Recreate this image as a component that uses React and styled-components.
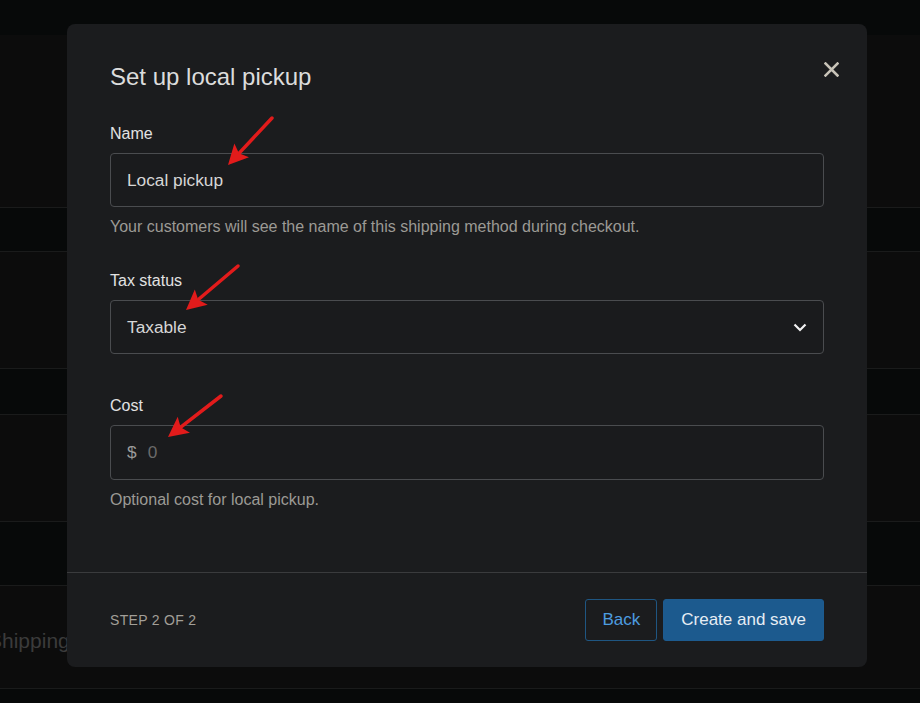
import React from 'react';
import styled, { createGlobalStyle } from 'styled-components';

const GlobalStyle = createGlobalStyle`
    html, body {
        margin: 0;
        padding: 0;
        background: #0b0b0b;
        font-family: "Liberation Sans", Arial, sans-serif;
        overflow: hidden;
    }
`;

const Page = styled.div`
    position: relative;
    width: 920px;
    height: 703px;
    overflow: hidden;
`;

const Band = styled.div`
    height: ${ p => p.h }px;
    background: ${ p => p.dark ? '#070909' : '#0c0c0c' };
    border-bottom: ${ p => p.line ? '1px solid #1a1b1b' : 'none' };
    display: flex;
    align-items: center;
`;

const BandText = styled.span`
    margin-left: -12px;
    margin-top: 8px;
    font-size: 21px;
    color: #3b3b3b;
`;

const Modal = styled.div`
    position: absolute;
    left: 67px;
    top: 24px;
    width: 800px;
    height: 643px;
    background: #1b1c1e;
    border-radius: 8px;
    display: flex;
    flex-direction: column;
`;

const Body = styled.div`
    position: relative;
    flex: 1;
    padding: 38px 43px 0;
    border-bottom: 1px solid #3a3b3d;
`;

const Title = styled.h2`
    margin: 0;
    font-size: 24px;
    line-height: 30px;
    font-weight: 400;
    color: #dcdcdc;
`;

const Close = styled.button`
    position: absolute;
    right: 27px;
    top: 36px;
    width: 18px;
    height: 18px;
    padding: 0;
    border: none;
    background: none;
    display: flex;
    align-items: center;
    justify-content: center;
`;

const Field = styled.div`
    position: relative;
    margin-top: ${ p => p.top }px;
`;

const Label = styled.div`
    font-size: 16px;
    line-height: 20px;
    color: #e2e2e2;
`;

const Box = styled.div`
    margin-top: 9px;
    height: ${ p => p.h || 54 }px;
    box-sizing: border-box;
    border: 1px solid #4a4c4f;
    border-radius: 4px;
    background: #1a1b1d;
    display: flex;
    align-items: center;
    padding: 0 16px;
    font-size: 17.3px;
    color: #d6d6d6;
`;

const Grow = styled.span`
    flex: 1;
`;

const Prefix = styled.span`
    color: #9b9b9b;
    margin-right: 11px;
`;

const Placeholder = styled.span`
    color: #6a6a6a;
`;

const Help = styled.div`
    margin-top: 10px;
    font-size: 16px;
    line-height: 20px;
    color: #9c9a95;
`;

const Arrow = styled.svg`
    position: absolute;
    left: ${ p => p.x }px;
    top: ${ p => p.y }px;
    overflow: visible;
`;

const Footer = styled.div`
    height: 94px;
    padding: 0 43px;
    display: flex;
    align-items: center;
    justify-content: space-between;
`;

const Step = styled.span`
    font-size: 14px;
    color: #a29f98;
    letter-spacing: 0.3px;
`;

const Buttons = styled.div`
    display: flex;
    gap: 6px;
`;

const Button = styled.button`
    height: 42px;
    padding: 0 ${ p => p.primary ? 17 : 16 }px;
    border-radius: 3px;
    font-family: inherit;
    font-size: 17px;
    border: 1px solid ${ p => p.primary ? '#1d5b8f' : '#1f5682' };
    background: ${ p => p.primary ? '#1c5a8e' : 'transparent' };
    color: ${ p => p.primary ? '#e6edf4' : '#4d9de0' };
`;

const RedArrow = ({ x, y, dx, dy }) => {
    const len = Math.hypot(dx, dy);
    const ux = dx / len;
    const uy = dy / len;
    const head = 20;
    const bx = dx - ux * head;
    const by = dy - uy * head;
    const px = -uy * 10;
    const py = ux * 10;
    return (
        <Arrow x={ x } y={ y } width="1" height="1">
            <line x1="0" y1="0" x2={ bx + ux * 3 } y2={ by + uy * 3 } stroke="#e21b1b" strokeWidth="3.5" strokeLinecap="round" />
            <polygon points={ `${ dx },${ dy } ${ bx + px },${ by + py } ${ bx + ux * 4 },${ by + uy * 4 } ${ bx - px },${ by - py }` } fill="#e21b1b" />
        </Arrow>
    );
};

const App = () => (
    <Page>
        <GlobalStyle />
        <Band h={ 35 } dark />
        <Band h={ 172 } line />
        <Band h={ 43 } dark line />
        <Band h={ 116 } line />
        <Band h={ 45 } dark line />
        <Band h={ 106 } line />
        <Band h={ 63 } dark line />
        <Band h={ 102 } line>
            <BandText>Shipping</BandText>
        </Band>
        <Band h={ 14 } dark />

        <Modal>
            <Body>
                <Title>Set up local pickup</Title>
                <Close aria-label="Close">
                    <svg width="15" height="15" viewBox="0 0 15 15">
                        <path d="M1.5 1.5 L13.5 13.5 M13.5 1.5 L1.5 13.5" stroke="#c8c3b8" strokeWidth="2.5" strokeLinecap="square" />
                    </svg>
                </Close>

                <Field top={ 32 }>
                    <Label>Name</Label>
                    <Box>Local pickup</Box>
                    <Help>Your customers will see the name of this shipping method during checkout.</Help>
                    <RedArrow x={ 162 } y={ -6 } dx={ -44 } dy={ 47 } />
                </Field>

                <Field top={ 34 }>
                    <Label>Tax status</Label>
                    <Box>
                        <Grow>Taxable</Grow>
                        <svg width="14" height="9" viewBox="0 0 14 9">
                            <path d="M1.5 1.5 L7 7 L12.5 1.5" fill="none" stroke="#f2f2f2" strokeWidth="2.2" />
                        </svg>
                    </Box>
                    <RedArrow x={ 128 } y={ -5 } dx={ -52 } dy={ 44 } />
                </Field>

                <Field top={ 42 }>
                    <Label>Cost</Label>
                    <Box h={ 55 }>
                        <Prefix>$</Prefix>
                        <Placeholder>0</Placeholder>
                    </Box>
                    <Help>Optional cost for local pickup.</Help>
                    <RedArrow x={ 111 } y={ 0 } dx={ -53 } dy={ 41 } />
                </Field>
            </Body>
            <Footer>
                <Step>STEP 2 OF 2</Step>
                <Buttons>
                    <Button>Back</Button>
                    <Button primary>Create and save</Button>
                </Buttons>
            </Footer>
        </Modal>
    </Page>
);

export default App;
